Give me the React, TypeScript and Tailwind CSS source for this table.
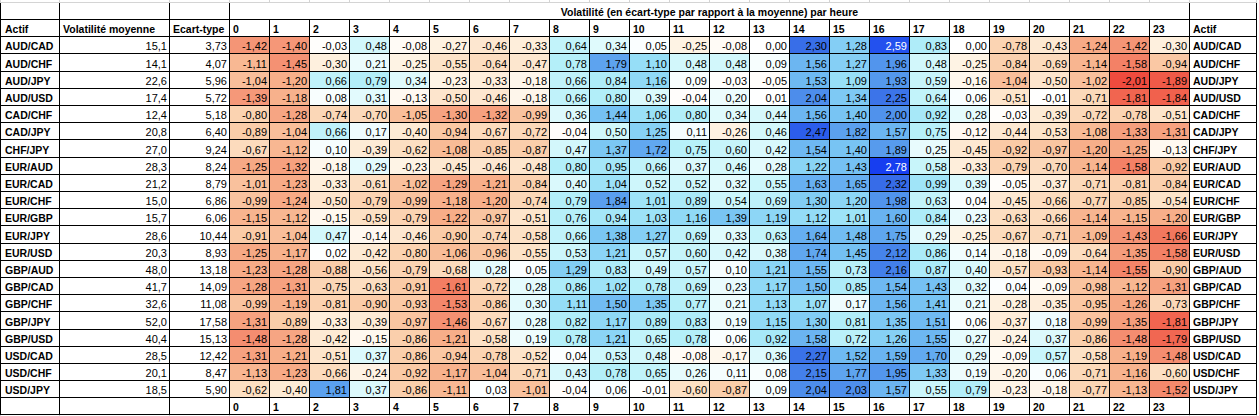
import React from 'react';

type Row = { name: string; vol: string; et: string; h: number[] };

const rows: Row[] = [
    { name: 'AUD/CAD', vol: '15,1', et: '3,73', h: [-1.42, -1.4, -0.03, 0.48, -0.08, -0.27, -0.46, -0.33, 0.64, 0.34, 0.05, -0.25, -0.08, 0.0, 2.3, 1.28, 2.59, 0.83, 0.0, -0.78, -0.43, -1.24, -1.42, -0.3] },
    { name: 'AUD/CHF', vol: '14,1', et: '4,07', h: [-1.11, -1.45, -0.3, 0.21, -0.25, -0.55, -0.64, -0.47, 0.78, 1.79, 1.1, 0.48, 0.48, 0.09, 1.56, 1.27, 1.96, 0.48, -0.25, -0.84, -0.69, -1.14, -1.58, -0.94] },
    { name: 'AUD/JPY', vol: '22,6', et: '5,96', h: [-1.04, -1.2, 0.66, 0.79, 0.34, -0.23, -0.33, -0.18, 0.66, 0.84, 1.16, 0.09, -0.03, -0.05, 1.53, 1.09, 1.93, 0.59, -0.16, -1.04, -0.5, -1.02, -2.01, -1.89] },
    { name: 'AUD/USD', vol: '17,4', et: '5,72', h: [-1.39, -1.18, 0.08, 0.31, -0.13, -0.5, -0.46, -0.18, 0.66, 0.8, 0.39, -0.04, 0.2, 0.01, 2.04, 1.34, 2.25, 0.64, 0.06, -0.51, -0.01, -0.71, -1.81, -1.84] },
    { name: 'CAD/CHF', vol: '12,4', et: '5,18', h: [-0.8, -1.28, -0.74, -0.7, -1.05, -1.3, -1.32, -0.99, 0.36, 1.44, 1.06, 0.8, 0.34, 0.44, 1.56, 1.4, 2.0, 0.92, 0.28, -0.03, -0.39, -0.72, -0.78, -0.51] },
    { name: 'CAD/JPY', vol: '20,8', et: '6,40', h: [-0.89, -1.04, 0.66, 0.17, -0.4, -0.94, -0.67, -0.72, -0.04, 0.5, 1.25, 0.11, -0.26, 0.46, 2.47, 1.82, 1.57, 0.75, -0.12, -0.44, -0.53, -1.08, -1.33, -1.31] },
    { name: 'CHF/JPY', vol: '27,0', et: '9,24', h: [-0.67, -1.12, 0.1, -0.39, -0.62, -1.08, -0.85, -0.87, 0.47, 1.37, 1.72, 0.75, 0.6, 0.42, 1.54, 1.4, 1.89, 0.25, -0.45, -0.92, -0.97, -1.2, -1.25, -0.13] },
    { name: 'EUR/AUD', vol: '28,3', et: '8,24', h: [-1.25, -1.32, -0.18, 0.29, -0.23, -0.45, -0.46, -0.48, 0.8, 0.95, 0.66, 0.37, 0.46, 0.28, 1.22, 1.43, 2.78, 0.58, -0.33, -0.79, -0.7, -1.14, -1.58, -0.92] },
    { name: 'EUR/CAD', vol: '21,2', et: '8,79', h: [-1.01, -1.23, -0.33, -0.61, -1.02, -1.29, -1.21, -0.84, 0.4, 1.04, 0.52, 0.52, 0.32, 0.55, 1.63, 1.65, 2.32, 0.99, 0.39, -0.05, -0.37, -0.71, -0.81, -0.84] },
    { name: 'EUR/CHF', vol: '15,0', et: '6,86', h: [-0.99, -1.24, -0.5, -0.79, -0.99, -1.18, -1.2, -0.74, 0.79, 1.84, 1.01, 0.89, 0.54, 0.69, 1.3, 1.2, 1.98, 0.63, 0.04, -0.45, -0.66, -0.77, -0.85, -0.54] },
    { name: 'EUR/GBP', vol: '15,7', et: '6,06', h: [-1.15, -1.12, -0.15, -0.59, -0.79, -1.22, -0.97, -0.51, 0.76, 0.94, 1.03, 1.16, 1.39, 1.19, 1.12, 1.01, 1.6, 0.84, 0.23, -0.63, -0.66, -1.14, -1.15, -1.2] },
    { name: 'EUR/JPY', vol: '28,6', et: '10,44', h: [-0.91, -1.04, 0.47, -0.14, -0.46, -0.9, -0.74, -0.58, 0.66, 1.38, 1.27, 0.69, 0.33, 0.63, 1.64, 1.48, 1.75, 0.29, -0.25, -0.67, -0.71, -1.09, -1.43, -1.66] },
    { name: 'EUR/USD', vol: '20,3', et: '8,93', h: [-1.25, -1.17, 0.02, -0.42, -0.8, -1.06, -0.96, -0.55, 0.53, 1.21, 0.57, 0.6, 0.42, 0.38, 1.74, 1.45, 2.12, 0.86, 0.14, -0.18, -0.09, -0.64, -1.35, -1.58] },
    { name: 'GBP/AUD', vol: '48,0', et: '13,18', h: [-1.23, -1.28, -0.88, -0.56, -0.79, -0.68, 0.28, 0.05, 1.29, 0.83, 0.49, 0.57, 0.1, 1.21, 1.55, 0.73, 2.16, 0.87, 0.4, -0.57, -0.93, -1.14, -1.55, -0.9] },
    { name: 'GBP/CAD', vol: '41,7', et: '14,09', h: [-1.28, -1.31, -0.75, -0.63, -0.91, -1.61, -0.72, 0.28, 0.86, 1.02, 0.78, 0.69, 0.23, 1.17, 1.5, 0.85, 1.54, 1.43, 0.32, 0.04, -0.09, -0.98, -1.12, -1.31] },
    { name: 'GBP/CHF', vol: '32,6', et: '11,08', h: [-0.99, -1.19, -0.81, -0.9, -0.93, -1.53, -0.86, 0.3, 1.11, 1.5, 1.35, 0.77, 0.21, 1.13, 1.07, 0.17, 1.56, 1.41, 0.21, -0.28, -0.35, -0.95, -1.26, -0.73] },
    { name: 'GBP/JPY', vol: '52,0', et: '17,58', h: [-1.31, -0.89, -0.33, -0.39, -0.97, -1.46, -0.67, 0.28, 0.82, 1.17, 0.89, 0.83, 0.19, 1.15, 1.3, 0.81, 1.35, 1.51, 0.06, -0.37, 0.18, -0.99, -1.35, -1.81] },
    { name: 'GBP/USD', vol: '40,4', et: '15,13', h: [-1.48, -1.28, -0.42, -0.15, -0.86, -1.21, -0.58, 0.19, 0.78, 1.21, 0.65, 0.78, 0.06, 0.92, 1.58, 0.72, 1.26, 1.55, 0.27, -0.24, 0.37, -0.86, -1.48, -1.79] },
    { name: 'USD/CAD', vol: '28,5', et: '12,42', h: [-1.31, -1.21, -0.51, 0.37, -0.86, -0.94, -0.78, -0.52, 0.04, 0.53, 0.48, -0.08, -0.17, 0.36, 2.27, 1.52, 1.59, 1.7, 0.29, -0.09, 0.57, -0.58, -1.19, -1.48] },
    { name: 'USD/CHF', vol: '20,1', et: '8,47', h: [-1.13, -1.23, -0.66, -0.24, -0.92, -1.17, -1.04, -0.71, 0.43, 0.78, 0.65, 0.26, 0.11, 0.08, 2.15, 1.77, 1.95, 1.33, 0.19, -0.2, 0.06, -0.71, -1.16, -0.6] },
    { name: 'USD/JPY', vol: '18,5', et: '5,90', h: [-0.62, -0.4, 1.81, 0.37, -0.86, -1.11, 0.03, -1.01, -0.04, 0.06, -0.01, -0.6, -0.87, 0.09, 2.04, 2.03, 1.57, 0.55, 0.79, -0.23, -0.18, -0.77, -1.13, -1.52] },
];

const hours = Array.from({ length: 24 }, (_, i) => i);

// colour scale stops: [abs value, r, g, b]
const posStops = [
    [0, 255, 255, 255], [0.25, 232, 251, 253], [0.5, 208, 247, 251], [0.8, 178, 238, 249],
    [1.1, 150, 222, 247], [1.4, 120, 196, 243], [1.7, 98, 170, 240], [2.0, 80, 146, 236],
    [2.3, 56, 110, 232], [2.6, 34, 80, 238], [2.8, 22, 60, 240],
];
const negStops = [
    [0, 255, 255, 255], [0.3, 254, 240, 222], [0.6, 252, 224, 196], [0.9, 250, 204, 168],
    [1.2, 247, 175, 138], [1.45, 244, 145, 115], [1.7, 242, 115, 90], [2.0, 239, 76, 62], [2.1, 238, 70, 58],
];

const scale = (v: number) => {
    const stops = v < 0 ? negStops : posStops;
    const a = Math.abs(v);
    for (let i = 1; i < stops.length; i++) {
        if (a <= stops[i][0] || i === stops.length - 1) {
            const [x0, r0, g0, b0] = stops[i - 1];
            const [x1, r1, g1, b1] = stops[i];
            const t = Math.min(1, (a - x0) / (x1 - x0));
            const mix = (p: number, q: number) => Math.round(p + (q - p) * t);
            return `rgb(${mix(r0, r1)}, ${mix(g0, g1)}, ${mix(b0, b1)})`;
        }
    }
    return '#fff';
};

const fmt = (v: number) => v.toFixed(2).replace('.', ',');

const cell = 'border border-black p-0 whitespace-nowrap overflow-hidden align-bottom leading-[14px]';

export default function App() {
    return (
        <div className="w-[1259px] h-[416px] bg-white overflow-hidden font-['Liberation_Sans',Arial,sans-serif] text-[11px] text-black">
            <table className="table-fixed border-collapse w-[1256px]">
                <colgroup>
                    <col className="w-[59px]" />
                    <col className="w-[110px]" />
                    <col className="w-[60px]" />
                    {hours.map((h) => (
                        <col key={h} className="w-[40px]" />
                    ))}
                    <col className="w-[67px]" />
                </colgroup>
                <tbody>
                    {/* partial excel row above */}
                    <tr className="h-[2px]">
                        {Array.from({ length: 28 }, (_, i) => (
                            <td key={i} className="p-0 border-x border-b border-[#d4d4d4]" />
                        ))}
                    </tr>

                    {/* title row */}
                    <tr className="h-[17px]">
                        <td className={`${cell} border-t-0`} />
                        <td className={`${cell} border-t-0`} />
                        <td className={`${cell} border-t-0`} />
                        <td colSpan={24} className={`${cell} border-t-0 text-center font-bold text-[10.5px]`}>
                            Volatilité (en écart-type par rapport à la moyenne) par heure
                        </td>
                        <td className={`${cell} border-t-0`} />
                    </tr>

                    {/* header row */}
                    <tr className="h-[17px] font-bold text-[10.5px]">
                        <td className={`${cell} pl-[4px]`}>Actif</td>
                        <td className={`${cell} pl-[3px]`}>Volatilité moyenne</td>
                        <td className={`${cell} pl-[3px]`}>Ecart-type</td>
                        {hours.map((h) => (
                            <td key={h} className={`${cell} pl-[3px]`}>
                                {h}
                            </td>
                        ))}
                        <td className={`${cell} pl-[3px]`}>Actif</td>
                    </tr>

                    {rows.map((r, i) => (
                        <tr key={r.name} className={i % 5 === 1 ? 'h-[18px]' : 'h-[17px]'}>
                            <td className={`${cell} pl-[4px] font-bold text-[10.5px]`}>{r.name}</td>
                            <td className={`${cell} pr-[2px] text-right`}>{r.vol}</td>
                            <td className={`${cell} pr-[2px] text-right`}>{r.et}</td>
                            {r.h.map((v, j) => (
                                <td
                                    key={j}
                                    className={`${cell} pr-[2px] text-right ${v >= 2.5 ? 'text-white' : ''}`}
                                    style={{ backgroundColor: scale(v) }}
                                >
                                    {fmt(v)}
                                </td>
                            ))}
                            <td className={`${cell} pl-[3px] font-bold text-[10.5px]`}>{r.name}</td>
                        </tr>
                    ))}

                    {/* footer hours */}
                    <tr className="h-[17px] font-bold text-[10.5px]">
                        <td className={cell} />
                        <td className={cell} />
                        <td className={cell} />
                        {hours.map((h) => (
                            <td key={h} className={`${cell} pl-[3px]`}>
                                {h}
                            </td>
                        ))}
                        <td className={cell} />
                    </tr>

                    <tr className="h-[2px]">
                        {Array.from({ length: 28 }, (_, i) => (
                            <td key={i} className="p-0 border-x border-[#d4d4d4]" />
                        ))}
                    </tr>
                </tbody>
            </table>
        </div>
    );
}
